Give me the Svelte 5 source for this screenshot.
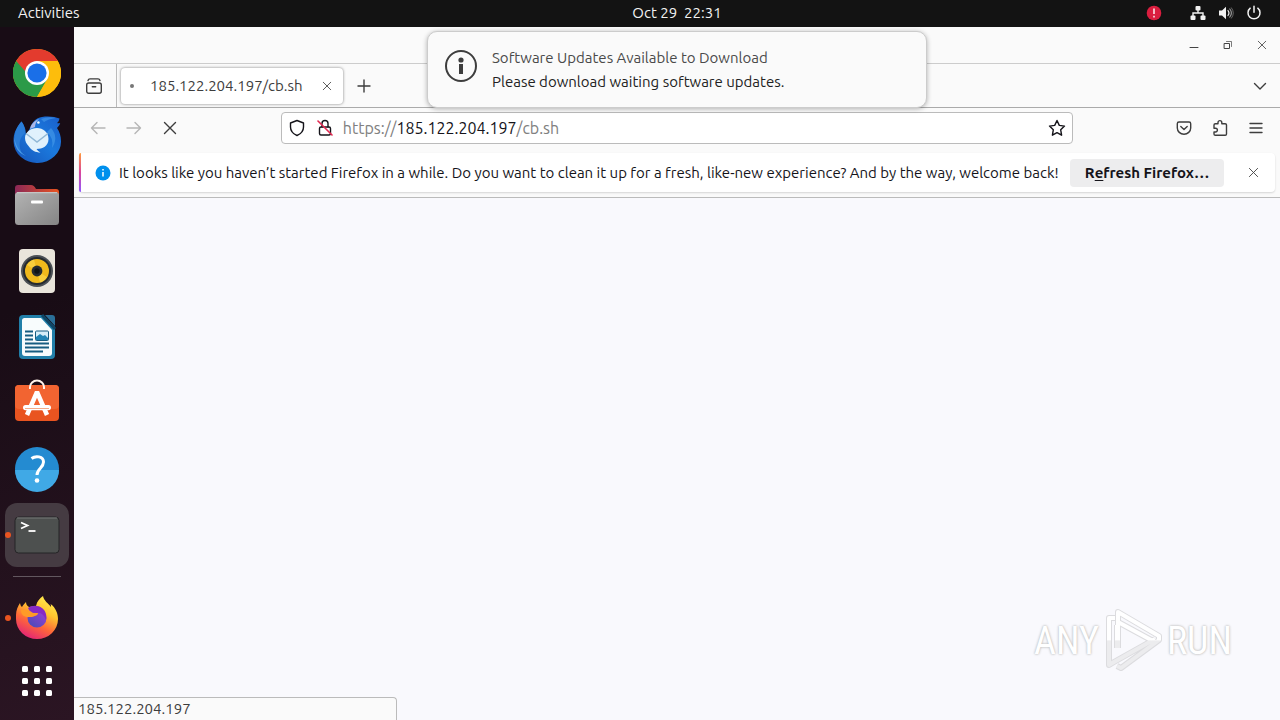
<script lang="ts">
  const host = "185.122.204.197";
  const path = "/cb.sh";

  let url = $state(`https://${host}${path}`);
  let editing = $state(false);
  let showBar = $state(true);

  // Dock launchers, top to bottom. `running` adds the orange pip.
  const apps = [
    { id: "chrome", name: "Google Chrome" },
    { id: "thunderbird", name: "Thunderbird Mail" },
    { id: "files", name: "Files" },
    { id: "rhythmbox", name: "Rhythmbox" },
    { id: "writer", name: "LibreOffice Writer" },
    { id: "software", name: "Ubuntu Software" },
    { id: "help", name: "Help" },
    { id: "terminal", name: "Terminal", running: true, active: true },
  ];

  const dots = [0, 1, 2].flatMap((r) => [0, 1, 2].map((c) => ({ x: 9 + c * 12, y: 9 + r * 12 })));
</script>

{#snippet cross(size: number)}
  <svg width={size} height={size} viewBox="0 0 12 12" class="line" aria-hidden="true">
    <path d="M1.5 1.5l9 9M10.5 1.5l-9 9" />
  </svg>
{/snippet}

<div class="desktop">
  <header class="topbar">
    <button class="activities">Activities</button>
    <button class="clock">Oct 29&nbsp; 22:31</button>
    <div class="tray">
      <button class="alert" aria-label="Problem detected">
        <svg width="16" height="16" viewBox="0 0 16 16">
          <circle cx="8" cy="8" r="7.3" fill="#da1e3f" />
          <path d="M8 3.6v5.4M8 10.8v1.6" stroke="#fff" stroke-width="1.4" />
        </svg>
      </button>
      <button class="status" aria-label="System menu">
        <svg width="16" height="16" viewBox="0 0 16 16" fill="#f2f2f2">
          <rect x="5.5" y="1" width="5" height="4.5" rx="1" />
          <rect x="0.5" y="10.5" width="5" height="4.5" rx="1" />
          <rect x="10.5" y="10.5" width="5" height="4.5" rx="1" />
          <path d="M8 5v3M3 11V8h10v3" fill="none" stroke="#f2f2f2" stroke-width="1.4" />
        </svg>
        <svg width="16" height="16" viewBox="0 0 16 16" fill="none" stroke-linecap="round">
          <path d="M1 5.5h3L8 1.7v12.6l-4-3.8H1z" fill="#f2f2f2" />
          <path d="M10 5.5q2 2.5 0 5" stroke="#e8e8e8" stroke-width="1.2" />
          <path d="M11.8 4q3.2 4 0 8" stroke="#999" stroke-width="1.2" />
          <path d="M13.4 2.8q4 5.2 0 10.4" stroke="#666" stroke-width="1" />
        </svg>
        <svg width="16" height="16" viewBox="0 0 16 16" fill="none" stroke="#f2f2f2" stroke-width="1.5" stroke-linecap="round">
          <path d="M4.2 3.2a6 6 0 1 0 7.6 0M8 1.3v6" />
        </svg>
      </button>
    </div>
  </header>

  <nav class="dock" aria-label="Dash">
    {#each apps as app (app.id)}
      <button class="launcher" class:active={app.active} class:running={app.running} aria-label={app.name}>
        <svg width="48" height="48" viewBox="0 0 48 48">
          {#if app.id === "chrome"}
            <circle cx="24" cy="24" r="24" fill="#fbbc05" />
            <path d="M24 0a24 24 0 0 1 20.8 12H24L13.6 30 3.2 12A24 24 0 0 1 24 0z" fill="#e33b2e" />
            <path d="M3.2 12A24 24 0 0 0 24 48l10.4-18H24a12 12 0 0 1-10.4-6z" fill="#2b9a48" />
            <path d="M24 12h20.8A24 24 0 0 1 24 48l10.4-18z" fill="#fdbd0c" />
            <circle cx="24" cy="24" r="12" fill="#fff" />
            <circle cx="24" cy="24" r="9.6" fill="#1a6fe8" />
          {:else if app.id === "thunderbird"}
            <defs>
              <linearGradient id="bird" x1="0" y1="1" x2="1" y2="0">
                <stop offset="0" stop-color="#1553b8" />
                <stop offset="0.55" stop-color="#1b79dd" />
                <stop offset="1" stop-color="#1a5fcb" />
              </linearGradient>
            </defs>
            <path d="M17 13c2-6 6-10 12-11 7-1.2 13 0 17.5 1.5-.4 2-1.2 3.5-2.5 4.5 1 .3 2 .2 3.2 0-.6 2-1.7 3.5-3.2 5 2.7 4 4 8 4 13a23.7 21.5 0 0 1-47.4 1C.3 20 2 14 8.5 6.5c3 4 4.5 8 4.5 14.5z" fill="url(#bird)" />
            <path d="M8.5 6.5C2 14 0 22 3 31c1 3 3 6 6 8-4-9-3-16 3-21 .3-3-1-8-3.5-11.5z" fill="#2a7dd8" />
            <path d="M1 22c2 8 4 14 12 19-8-3-12-9-12-19z" fill="#64b5f2" opacity=".6" />
            <path d="M17 14c1-5 4-8 9-10-3 3-4 5-4 8z" fill="#aab6e6" />
            <path d="M28 4q7-3 15-1-8 1-12 4zM38 13q8 9 1 20 2-10-5-16z" fill="#50a5ef" opacity=".5" />
            <circle cx="25.4" cy="7.5" r="1.3" fill="#e9f7ff" />
            <path d="M12 23c0-6 6-10 12-10s11.500 4 11.500 11c0 7-6 10-12 10 1 1.500 2 2.500 4 3.500-5 0-9-2-12-6.500-2-2-3.500-5-3.500-8z" fill="#e0f1fc" />
            <path d="M13 18.5l11 8.5 11-8.5" stroke="#91b8d5" stroke-width="1.5" fill="none" />
          {:else if app.id === "files"}
            <defs>
              <linearGradient id="folderBack"><stop stop-color="#8b2857" /><stop offset="1" stop-color="#e95420" /></linearGradient>
              <linearGradient id="folder" x1="0" y1="0" x2="1" y2="1"><stop stop-color="#b3b3b3" /><stop offset="1" stop-color="#858585" /></linearGradient>
            </defs>
            <path d="M2 14V7q0-3 3-3h13q3 0 5 4h20q3 0 3 3v7z" fill="url(#folderBack)" />
            <rect x="2" y="11" width="44" height="33" rx="3.5" fill="url(#folder)" />
            <path d="M4 11.7h40" stroke="#ccc" stroke-width="1" />
            <rect x="18" y="19.5" width="12" height="3" rx="1" fill="#fff" />
          {:else if app.id === "rhythmbox"}
            <rect x="6" y="2" width="36" height="44" rx="4" fill="#e9e5db" />
            <circle cx="24" cy="24" r="16" fill="#4b5055" />
            <circle cx="24" cy="24" r="14" fill="#252a2f" />
            <circle cx="24" cy="24" r="12" fill="#f0b91c" />
            <path d="M24 24L14 18a12 12 0 0 1 7-5.5zM24 24l10 6a12 12 0 0 1-7 5.5z" fill="#ffe15b" opacity=".5" />
            <circle cx="24" cy="24" r="5.4" fill="#262b30" />
            <circle cx="24" cy="24" r="2.7" fill="#101316" />
          {:else if app.id === "writer"}
            <path d="M10 2h20l12 12v28q0 4-4 4H10q-4 0-4-4V6q0-4 4-4z" fill="#217fa9" />
            <path d="M11.5 5H28l11 12v23q0 3-3 3H12q-3 0-3-3V7.5Q9 5 11.5 5z" fill="#f8fcfd" />
            <path d="M32 2h7q3 0 3 3v8z" fill="#2a6f98" />
            <path d="M29 2l13 14" stroke="#0e4666" stroke-width="3" />
            <path d="M12 18.5h8M12 22.5h8M12 26.5h8M12 30.5h24M12 34.5h24M12 38.5h18" stroke="#175d81" stroke-width="2" />
            <rect x="22.5" y="18" width="13" height="9.5" rx="1" fill="#d5edf8" stroke="#175d81" />
            <path d="M23 27v-3l4-3 3 2 2-1 3 3v2z" fill="#2384b4" />
          {:else if app.id === "software"}
            <rect x="2" y="6" width="44" height="36" rx="4" fill="#e95420" />
            <rect x="2" y="6" width="44" height="24" rx="4" fill="#f26431" />
            <path d="M17 10V8a7 6.5 0 0 1 14 0v2" fill="none" stroke="#fff3eb" stroke-width="2" />
            <path d="M14 36l10-23 10 23" fill="none" stroke="#fff" stroke-width="4.5" stroke-linejoin="bevel" />
            <rect x="10" y="26" width="28" height="5.2" rx="2.6" fill="#fff" />
            <path d="M12 29.5h24" stroke="#f4ab89" stroke-width="1" />
          {:else if app.id === "help"}
            <circle cx="24" cy="24" r="22" fill="#248bd1" />
            <path d="M2 25a22 22 0 0 0 44 0z" fill="#40a9e6" />
            <path d="M18.5 13.5c4-3 12-2.5 12 3.5 0 6-6.5 6.5-6.5 13" fill="none" stroke="#fff" stroke-width="3" />
            <circle cx="24" cy="35.5" r="2.3" fill="#fff" />
          {:else}
            <rect x="2" y="6" width="44" height="36" rx="3.5" fill="#4d504f" stroke="#252426" />
            <path d="M4 7h40" stroke="#777978" />
            <path d="M8 11.5l6.5 3-6.5 3" fill="none" stroke="#fff" stroke-width="1.8" />
            <path d="M15.5 20h7" stroke="#fff" stroke-width="1.8" />
          {/if}
        </svg>
      </button>
    {/each}
    <hr />
    <button class="launcher running" aria-label="Firefox Web Browser">
      <svg width="48" height="48" viewBox="0 0 48 48">
        <defs>
          <linearGradient id="foxBody" x1=".8" y1="0" x2=".3" y2="1">
            <stop offset="0" stop-color="#fff152" />
            <stop offset=".35" stop-color="#ffc52f" />
            <stop offset=".65" stop-color="#ff6938" />
            <stop offset="1" stop-color="#e22278" />
          </linearGradient>
          <linearGradient id="globe" x1="1" y1="0" x2=".2" y2="1">
            <stop stop-color="#a63dd8" /><stop offset="1" stop-color="#4b4bb9" />
          </linearGradient>
        </defs>
        <path d="M3 21c0-5 2-9 4-12 .4 2 .8 3 2 4 1-2 3-4 4-5 0 2 1 4 3 5l7-1c1-5 4-8 7-10 1 5 5 7 8 11 0-1 0-2-.4-3C43 14 45 20 45 25a21 20 0 0 1-42 0z" fill="url(#foxBody)" />
        <circle cx="24" cy="24" r="9.5" fill="url(#globe)" />
        <path d="M15 14c4-3 10-3 14 0 4 3 5 8 4 12-2-5-5-8-9-7l-7-1z" fill="#862ac4" />
        <path d="M8 16c5-1 9 0 12 3h5c0 3-4 3-6 4-2 0-4 0-5 0-5-1-6-4-6-7z" fill="#ff9b27" />
      </svg>
    </button>
    <button class="launcher show-apps" aria-label="Show Applications">
      <svg width="42" height="42" viewBox="0 0 42 42" fill="#fff">
        {#each dots as d}
          <rect x={d.x - 3} y={d.y - 3} width="6" height="6" rx="1.5" />
        {/each}
      </svg>
    </button>
  </nav>

  <main class="window">
    <div class="titlebar">
      <button aria-label="Minimize"><svg width="12" height="12" viewBox="0 0 12 12" class="line"><path d="M2 8.5h8" /></svg></button>
      <button aria-label="Restore"><svg width="12" height="12" viewBox="0 0 12 12" class="line"><path d="M2.5 4.5h5v5h-5z" /><path d="M4.5 2.5h5v5" stroke-width=".7" /></svg></button>
      <button aria-label="Close">{@render cross(10)}</button>
    </div>

    <div class="tabs">
      <button class="view" aria-label="Firefox View">
        <svg width="18" height="18" viewBox="0 0 18 18" class="line bold">
          <rect x="1.7" y="6" width="14.6" height="10.3" rx="2" />
          <path d="M3 3.5Q3.5 1.9 5 1.9h8q1.5 0 2 1.6M7.3 9.8h3.4" />
        </svg>
      </button>
      <div class="tab">
        <span class="loading"></span>
        <span class="title">{host}{path}</span>
        <button aria-label="Close tab">{@render cross(10)}</button>
      </div>
      <button class="add" aria-label="New tab"><svg width="14" height="14" viewBox="0 0 14 14" class="line bold"><path d="M7 1v12M1 7h12" /></svg></button>
      <button class="all" aria-label="List all tabs"><svg width="14" height="14" viewBox="0 0 14 14" class="line bold"><path d="M1.5 4.5L7 10l5.5-5.5" /></svg></button>
    </div>

    <div class="toolbar">
      <button aria-label="Back" disabled><svg width="16" height="16" viewBox="0 0 16 16" class="line bold"><path d="M15 8H1.5M7 2.5L1.5 8 7 13.5" /></svg></button>
      <button aria-label="Forward" disabled><svg width="16" height="16" viewBox="0 0 16 16" class="line bold"><path d="M1 8h13.5M9 2.5L14.5 8 9 13.5" /></svg></button>
      <button aria-label="Stop"><svg width="14" height="14" viewBox="0 0 14 14" class="line bold"><path d="M1.5 1.5l11 11M12.5 1.5l-11 11" /></svg></button>
      <div class="spring"></div>
      <div class="urlbar">
        <button aria-label="Tracking protection"><svg width="16" height="18" viewBox="0 0 16 18" class="line bold"><path d="M8 1.5L14.5 4v4c0 4-3 7-6.5 8.5C4.5 15 1.5 12 1.5 8V4z" /></svg></button>
        <button aria-label="Connection not secure">
          <svg width="16" height="18" viewBox="0 0 16 18" class="line bold">
            <rect x="2.5" y="8" width="11" height="8" rx="1.5" />
            <path d="M5 8V4.5a3 3 0 0 1 6 0V8" />
            <path d="M1 2l14 14" stroke="#e22850" stroke-width="1.6" />
          </svg>
        </button>
        <div class="address" class:editing>
          <input
            type="text"
            aria-label="Search or enter address"
            spellcheck="false"
            bind:value={url}
            onfocus={() => (editing = true)}
            onblur={() => (editing = false)}
          />
          <span aria-hidden="true">https://<b>{host}</b>{path}</span>
        </div>
        <button aria-label="Bookmark this page"><svg width="18" height="18" viewBox="0 0 18 18" class="line bold"><path d="M9 1.5l2.3 4.9 5.2.7-3.8 3.7.9 5.4L9 13.6l-4.6 2.6.9-5.4L1.5 7.1l5.2-.7z" /></svg></button>
      </div>
      <div class="spring"></div>
      <button aria-label="Save to Pocket"><svg width="16" height="16" viewBox="0 0 16 16" class="line bold"><path d="M3 2h10q1.7 0 1.7 1.7V8A6.7 6.2 0 0 1 1.3 8V3.7Q1.3 2 3 2zM4.8 6.5L8 9.5l3.2-3" /></svg></button>
      <button aria-label="Extensions"><svg width="18" height="18" viewBox="0 0 18 18" class="line bold"><path d="M3 7V6q0-1.3 1.3-1.3H7V3.5a1.9 1.9 0 0 1 3.8 0v1.2h3.4q1.3 0 1.3 1.3v9q0 1.3-1.3 1.3H4.3Q3 16.3 3 15v-2h1.5a1.9 1.9 0 0 0 0-3.8H3z" /></svg></button>
      <button aria-label="Open application menu"><svg width="14" height="14" viewBox="0 0 14 14" class="line bold"><path d="M1 2.5h12M1 7h12M1 11.5h12" /></svg></button>
    </div>

    {#if showBar}
      <div class="infobar" role="status">
        <svg class="info" width="16" height="16" viewBox="0 0 16 16">
          <circle cx="8" cy="8" r="7.5" fill="#0090ed" />
          <path d="M8 7v4.5M8 4v1.6" stroke="#fff" stroke-width="1.5" />
        </svg>
        <p>It looks like you haven’t started Firefox in a while. Do you want to clean it up for a fresh, like-new experience? And by the way, welcome back!</p>
        <button class="refresh">R<u>e</u>fresh Firefox…</button>
        <button class="dismiss" aria-label="Dismiss" onclick={() => (showBar = false)}>{@render cross(11)}</button>
      </div>
    {/if}

    <section class="page" aria-label="Page content"></section>

    <div class="statuspanel">{host}</div>

    <div class="notification" role="alert">
      <svg width="34" height="34" viewBox="0 0 34 34">
        <circle cx="17" cy="17" r="15" fill="none" stroke="#3d3d3d" stroke-width="2" />
        <circle cx="17" cy="11" r="2.6" fill="#3d3d3d" />
        <path d="M17 15v10" stroke="#3d3d3d" stroke-width="4" />
      </svg>
      <div>
        <strong>Software Updates Available to Download</strong>
        <p>Please download waiting software updates.</p>
      </div>
    </div>

    <div class="watermark">
      <span>ANY</span>
      <svg width="60" height="66" viewBox="0 0 60 66">
        <defs>
          <linearGradient id="mark" gradientUnits="userSpaceOnUse" x1="0" y1="0" x2="0" y2="66">
            <stop offset=".48" stop-color="#fff" />
            <stop offset=".5" stop-color="#ececee" />
          </linearGradient>
        </defs>
        <g fill="none" stroke-linejoin="round">
          <path d="M12 10H6v47l5-3 41-23M15 40V4l41 24v4L18 60l-4-2M15 14l35 19M14 40V17" stroke="#dcdcdf" stroke-width="6" />
          <path d="M12 10H6v47l5-3 41-23M15 40V4l41 24v4L18 60l-4-2M15 14l35 19M14 40V17" stroke="url(#mark)" stroke-width="4" />
        </g>
      </svg>
      <span>RUN</span>
    </div>
  </main>
</div>

<style>
  :global(body) {
    background: #f9f9fb;
  }

  .desktop {
    display: grid;
    grid-template: 27px 1fr / 74px 1fr;
    min-height: 100vh;
    font: 15px/20px Ubuntu, "Noto Sans", sans-serif;
    color: #15141a;
  }

  button {
    display: flex;
    align-items: center;
    justify-content: center;
    margin: 0;
    padding: 0;
    border: 0;
    background: none;
    font: inherit;
    color: inherit;
  }
  p {
    margin: 0;
  }
  svg {
    display: block;
    flex: none;
  }
  .line {
    fill: none;
    stroke: currentColor;
    stroke-width: 1;
    stroke-linecap: round;
    stroke-linejoin: round;
  }
  .bold {
    stroke-width: 1.4;
  }

  /* ===== Top bar ===== */
  /* The clock is centred over the work area, not over the dock. */
  .topbar {
    grid-column: 1 / -1;
    display: grid;
    grid-template-columns: 74px 1fr auto 1fr;
    padding-bottom: 2px;
    background: #131313;
    color: #f2f2f2;
  }
  .activities {
    grid-column: 1 / 3;
    justify-self: start;
    padding: 0 18px;
  }
  .tray {
    display: flex;
    justify-content: flex-end;
    gap: 28px;
    padding-right: 18px;
  }
  .status {
    gap: 12px;
  }

  /* ===== Dock ===== */
  .dock {
    display: flex;
    flex-direction: column;
    align-items: center;
    gap: 2px;
    padding: 14px 0 10px;
    background: linear-gradient(160deg, #180c15 40%, #2b1523);
  }
  .launcher {
    position: relative;
    width: 64px;
    height: 64px;
    border-radius: 12px;
  }
  .launcher.active {
    background: #453b42;
  }
  /* Pip sits on the dock's edge side of the launcher. */
  .launcher.running::before {
    content: "";
    position: absolute;
    left: 0;
    width: 6px;
    height: 6px;
    border-radius: 50%;
    background: #e95420;
  }
  .launcher.show-apps {
    height: 58px;
    margin-top: auto;
  }
  hr {
    width: 48px;
    height: 1px;
    margin: 7px 0;
    border: 0;
    background: #62575f;
  }

  /* ===== Browser window ===== */
  .window {
    position: relative;
    display: flex;
    flex-direction: column;
    min-width: 0;
    background: #fafafa;
  }
  .titlebar {
    display: flex;
    justify-content: flex-end;
    height: 36px;
    padding-right: 1px;
    border-bottom: 1px solid #ccc;
    color: #444;
  }
  .titlebar button {
    width: 34px;
  }

  .tabs {
    display: flex;
    height: 43px;
    border-bottom: 1px solid #aaa;
    color: #3d3d3d;
  }
  .view {
    width: 43px;
    padding-right: 2px;
    border-right: 1px solid #bbb;
  }
  .tab {
    display: flex;
    align-items: center;
    width: 222px;
    margin: 4px 4px 3px;
    padding: 0 4px 0 9px;
    box-sizing: border-box;
    border-radius: 4px;
    background: #fff;
    box-shadow: 0 0 3px rgba(0, 0, 0, 0.5);
  }
  .loading {
    width: 4px;
    height: 4px;
    margin-right: 16px;
    border-radius: 50%;
    background: #777;
  }
  .title {
    flex: 1;
  }
  .tab button {
    width: 24px;
    height: 24px;
  }
  .add {
    width: 34px;
  }
  .all {
    width: 40px;
    margin-left: auto;
  }

  .toolbar {
    display: flex;
    align-items: center;
    height: 32px;
    padding: 4px 6px 9px;
    color: #3d3d3d;
  }
  .toolbar > button {
    width: 36px;
    height: 32px;
  }
  button:disabled {
    color: #b5b5b5;
  }
  .spring {
    flex: 2;
  }
  .urlbar {
    display: flex;
    flex: 17;
    height: 32px;
    padding: 0 1px;
    box-sizing: border-box;
    border: 1px solid #bbb;
    border-radius: 4px;
    background: #fff;
    color: #15141a;
  }
  .urlbar button {
    width: 28px;
  }
  .address {
    display: grid;
    flex: 1;
    align-items: center;
    padding-left: 4px;
    font-size: 16px;
  }
  .address > * {
    grid-area: 1 / 1;
  }
  .address span {
    color: #808080;
    pointer-events: none;
  }
  .address b {
    font-weight: 400;
    color: #15141a;
  }
  .address.editing span {
    visibility: hidden;
  }
  .address input {
    min-width: 0;
    padding: 0;
    border: 0;
    outline: 0;
    background: none;
    font: inherit;
    color: transparent;
  }
  .address.editing input {
    color: #15141a;
  }

  .infobar {
    position: relative;
    display: flex;
    align-items: center;
    height: 39px;
    margin: 0 5px 5px;
    padding: 0 6px 0 16px;
    border-radius: 4px;
    background: #fff;
    box-shadow: 0 1px 2px rgba(0, 0, 0, 0.15);
  }
  .infobar::before {
    content: "";
    position: absolute;
    inset: 0 auto 0 0;
    width: 2px;
    border-radius: 4px 0 0 4px;
    background: linear-gradient(#ff9a3d, #d9459c 50%, #9059ff);
  }
  .infobar p {
    flex: 1;
    min-width: 0;
    margin: 0 8px;
    overflow: hidden;
    text-overflow: ellipsis;
    white-space: nowrap;
  }
  .refresh {
    width: 154px;
    height: 28px;
    border-radius: 4px;
    background: #ededee;
    font-weight: 700;
    white-space: nowrap;
  }
  .refresh u {
    text-underline-offset: 2px;
  }
  .dismiss {
    width: 32px;
    height: 32px;
    margin-left: 13px;
    color: #444;
  }

  .page {
    flex: 1;
    border-top: 1px solid #bbb;
    background: #f9f9fd;
  }

  /* ===== Overlays ===== */
  .statuspanel {
    position: absolute;
    left: 0;
    bottom: 0;
    width: 318px;
    padding-left: 4px;
    border: solid #bbb;
    border-width: 1px 1px 0 0;
    border-radius: 0 4px 0 0;
    background: #fafafa;
    line-height: 22px;
    color: #3d3d3d;
  }

  .notification {
    position: absolute;
    top: 4px;
    left: 50%;
    display: flex;
    gap: 14px;
    width: 500px;
    height: 77px;
    padding: 14px 16px;
    box-sizing: border-box;
    border: 1px solid #ccc;
    border-radius: 10px;
    background: #fafafa;
    box-shadow: 0 1px 5px rgba(0, 0, 0, 0.3);
    transform: translateX(-50%);
    line-height: 24px;
    color: #222;
  }
  .notification svg {
    margin-top: 3px;
  }
  .notification strong {
    font-weight: 400;
    color: #4a4a4a;
  }

  .watermark {
    position: absolute;
    right: 48px;
    bottom: 46px;
    display: flex;
    align-items: center;
    gap: 4px;
    font: 38px/44px "Ubuntu Condensed", "Roboto Condensed", "Liberation Sans", sans-serif;
    pointer-events: none;
  }
  .watermark span {
    color: #fff;
    text-shadow: 0 0 2px #bbb, 0 0 3px #ccc;
  }
</style>
